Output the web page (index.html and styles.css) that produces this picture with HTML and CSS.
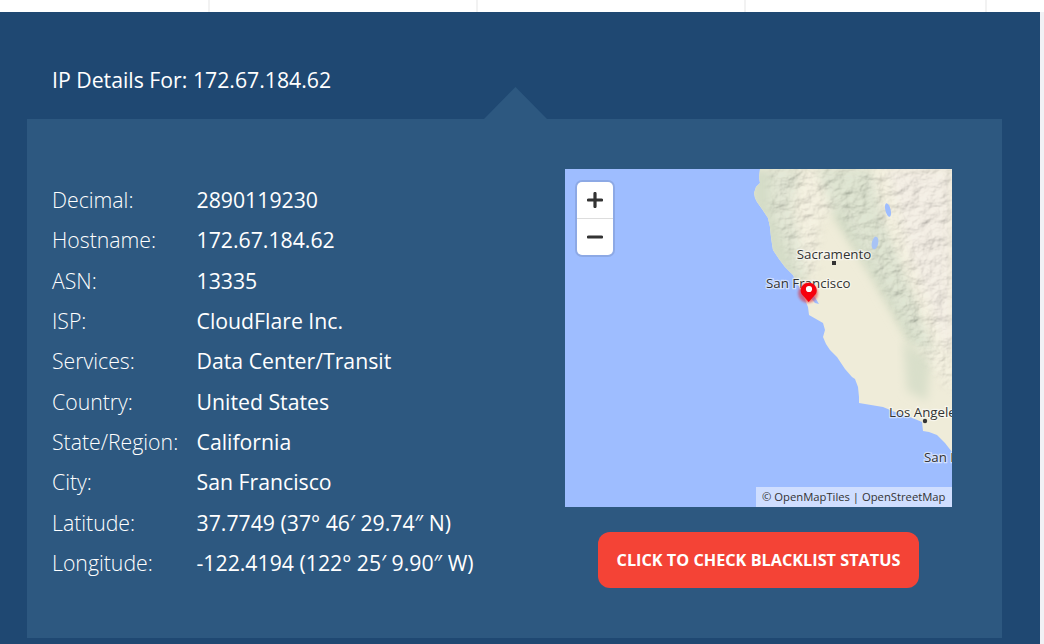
FILE: index.html
```html
<!DOCTYPE html>
<html lang="en">
<head>
    <meta charset="UTF-8">
    <meta name="viewport" content="width=device-width, initial-scale=1.0">
    <title>IP Details</title>
    <link rel="stylesheet" href="styles.css">
</head>
<body>
    <div class="top-strip">
        <div class="top-cell cell-a"></div>
        <div class="top-cell cell-b"></div>
        <div class="top-cell cell-b"></div>
        <div class="top-cell cell-d"></div>
    </div>

    <section class="ip-section">
        <h2 class="ip-title">IP Details For: 172.67.184.62</h2>
        <div class="ip-panel">
            <dl class="ip-details">
                <dt>Decimal:</dt><dd>2890119230</dd>
                <dt>Hostname:</dt><dd>172.67.184.62</dd>
                <dt>ASN:</dt><dd>13335</dd>
                <dt>ISP:</dt><dd>CloudFlare Inc.</dd>
                <dt>Services:</dt><dd>Data Center/Transit</dd>
                <dt>Country:</dt><dd>United States</dd>
                <dt>State/Region:</dt><dd>California</dd>
                <dt>City:</dt><dd>San Francisco</dd>
                <dt>Latitude:</dt><dd>37.7749 (37° 46′ 29.74″ N)</dd>
                <dt>Longitude:</dt><dd>-122.4194 (122° 25′ 9.90″ W)</dd>
            </dl>

            <div class="ip-side">
                <div class="map">
                    <svg class="map-art" viewBox="0 0 387 338" width="387" height="338">
                        <defs>
                            <clipPath id="landClip">
                                <path d="M195 0L194 8L195 14L191 18L189 24L190 29L192 33L197 40L203 49L205 58L206 68L207 75L208 81L214 90L220 98L228 106L231 112L235 119L239 128L243 138L244 146L251 150L258 154L260 161L258 168L261 175L265 181L272 188L280 200L287 208L290 210L293 218L294 228L294 234L306 236L318 238L330 243L345 248L357 253L358 262L364 263L372 266L380 274L387 283V0Z"/>
                            </clipPath>
                            <filter id="soft" x="-20%" y="-20%" width="140%" height="140%">
                                <feGaussianBlur stdDeviation="5"/>
                            </filter>
                            <filter id="pinHalo" x="-30%" y="-30%" width="160%" height="160%">
                                <feGaussianBlur stdDeviation="0.8"/>
                            </filter>
                            <filter id="relief" x="0" y="0" width="100%" height="100%">
                                <feTurbulence type="fractalNoise" baseFrequency="0.06 0.08" numOctaves="5" seed="7"/>
                                <feDiffuseLighting surfaceScale="4.5" diffuseConstant="1.15" lighting-color="#f5f1e6">
                                    <feDistantLight azimuth="225" elevation="55"/>
                                </feDiffuseLighting>
                                <feGaussianBlur stdDeviation="0.6"/>
                            </filter>
                            <mask id="reliefMask">
                                <path d="M205 0H387V225L345 165L305 95L272 40L256 50L250 105L232 110L205 40Z" fill="#fff" filter="url(#soft)"/>
                            </mask>
                        </defs>
                        <rect width="387" height="338" fill="#9ebdff"/>
                        <g clip-path="url(#landClip)">
                            <rect width="387" height="338" fill="#efecd9"/>
                            <path d="M185 0H236L228 40L242 105L232 125L200 90L185 30Z" fill="#d5ddc8" filter="url(#soft)"/>
                            <path d="M252 0H306L318 50L342 110L370 185L345 175L305 105L270 50Z" fill="#cfd9c3" filter="url(#soft)"/>
                            <path d="M322 0H387V190L368 150L345 90Z" fill="#efe9df" filter="url(#soft)"/>
                            <path d="M338 172L366 190L362 232L342 222Z" fill="#d9dfca" filter="url(#soft)"/>
                            <rect width="387" height="338" filter="url(#relief)" mask="url(#reliefMask)" opacity="0.34"/>
                        </g>
                        <ellipse cx="323" cy="41" rx="2.6" ry="7" fill="#9ebdff" transform="rotate(-14 323 41)"/>
                        <ellipse cx="310" cy="74" rx="3.2" ry="6.5" fill="#a8c3f5" transform="rotate(12 310 74)"/>
                        <path d="M243 120L248 125L254 135L250 134L244 127Z" fill="#9ebdff"/>

                        <rect x="267" y="92" width="4" height="4" fill="#333"/>
                        <circle cx="360" cy="252" r="2.2" fill="#333"/>
                        <text class="map-label" x="269" y="90" text-anchor="middle">Sacramento</text>
                        <text class="map-label" x="201" y="119">San Francisco</text>
                        <text class="map-label" x="324" y="248">Los Angeles</text>
                        <text class="map-label" x="359" y="293">San Diego</text>

                        <circle cx="243" cy="124" r="10" fill="#e0272f" opacity="0.55" filter="url(#pinHalo)"/>
                        <path d="M243.7 133L237 125.6C236 124.2 235.7 122.8 235.7 121.6C235.7 117.2 239.3 113.7 243.7 113.7C248.1 113.7 251.7 117.2 251.7 121.6C251.7 122.8 251.4 124.2 250.4 125.6Z" fill="#f6000d"/>
                        <circle cx="244" cy="120" r="3.1" fill="#fff"/>
                    </svg>

                    <div class="map-zoom">
                        <button class="zoom-btn" aria-label="Zoom in">
                            <svg viewBox="0 0 16 16" width="16" height="16"><path d="M8 1.5V14.5M1.5 8H14.5" stroke="#333" stroke-width="3.2" stroke-linecap="round"/></svg>
                        </button>
                        <button class="zoom-btn" aria-label="Zoom out">
                            <svg viewBox="0 0 16 16" width="16" height="16"><path d="M1.5 8H14.5" stroke="#333" stroke-width="3.2" stroke-linecap="round"/></svg>
                        </button>
                    </div>
                    <div class="map-credit">© OpenMapTiles | OpenStreetMap</div>
                </div>
                <a class="check-button" href="#">Click to check blacklist status</a>
            </div>
        </div>
    </section>
</body>
</html>
```

FILE: styles.css
```css
html, body {
    margin: 0;
    height: 100%;
    overflow: hidden;
}

body {
    font-family: 'Open Sans', sans-serif;
    background: #f1f1f5;
    color: #fff;
}

.top-strip {
    display: flex;
    height: 12px;
    background: #fff;
}

.top-cell {
    box-sizing: border-box;
    border-right: 2px solid #f2f2f2;
}

.cell-a { width: 210px; }
.cell-b { width: 268px; }
.cell-d { width: 241px; }

.ip-section {
    box-sizing: border-box;
    width: 1040px;
    height: 632px;
    padding-top: 54px;
    background: #1f4872;
}

.ip-title {
    margin: 0 0 25px 52px;
    font-size: 21.25px;
    font-weight: 400;
    line-height: 28px;
}

.ip-panel {
    position: relative;
    box-sizing: border-box;
    display: flex;
    width: 975px;
    height: 519px;
    margin-left: 27px;
    padding: 50px 0 0 25px;
    background: #2d5880;
}

/* little arrow pointing at the heading */
.ip-panel::before {
    content: '';
    position: absolute;
    top: -32px;
    left: 457px;
    width: 63px;
    height: 32px;
    background: #2d5880;
    clip-path: polygon(50% 0, 100% 100%, 0 100%);
}

.ip-details {
    display: grid;
    grid-template-columns: 144.5px 368.5px;
    grid-auto-rows: 40.33px;
    align-content: start;
    margin: 11px 0 0;
    font-size: 21.25px;
    line-height: 40.33px;
}

.ip-details dt {
    font-weight: 300;
}

.ip-details dd {
    margin: 0;
    white-space: nowrap;
}

.ip-side {
    display: flex;
    flex-direction: column;
    align-items: center;
    width: 387px;
}

.map {
    position: relative;
    width: 387px;
    height: 338px;
    overflow: hidden;
}

.map-art {
    display: block;
}

.map-label {
    font-family: 'Open Sans', sans-serif;
    font-size: 13.3px;
    fill: #333;
    stroke: rgba(255, 255, 255, 0.55);
    stroke-width: 2.5px;
    paint-order: stroke;
}

.map-zoom {
    position: absolute;
    top: 13px;
    left: 12px;
    width: 36px;
    border-radius: 5px;
    background: #fff;
    box-shadow: 0 0 0 2px rgba(0, 0, 0, 0.1);
}

.zoom-btn {
    display: flex;
    align-items: center;
    justify-content: center;
    width: 36px;
    height: 36px;
    padding: 0;
    border: none;
    background: none;
}

.zoom-btn + .zoom-btn {
    height: 37px;
    border-top: 1px solid #ddd;
}

.map-credit {
    position: absolute;
    right: 0;
    bottom: 0;
    box-sizing: border-box;
    width: 196px;
    height: 20px;
    padding-left: 6px;
    background: rgba(255, 255, 255, 0.5);
    color: #333;
    font-size: 11.25px;
    line-height: 20px;
    white-space: nowrap;
}

.check-button {
    display: block;
    box-sizing: border-box;
    width: 321px;
    height: 56px;
    margin-top: 25px;
    border-radius: 12px;
    background: #f44336;
    color: #fff;
    font-size: 16.25px;
    font-weight: 700;
    line-height: 56px;
    text-align: center;
    text-decoration: none;
    text-transform: uppercase;
}
```
